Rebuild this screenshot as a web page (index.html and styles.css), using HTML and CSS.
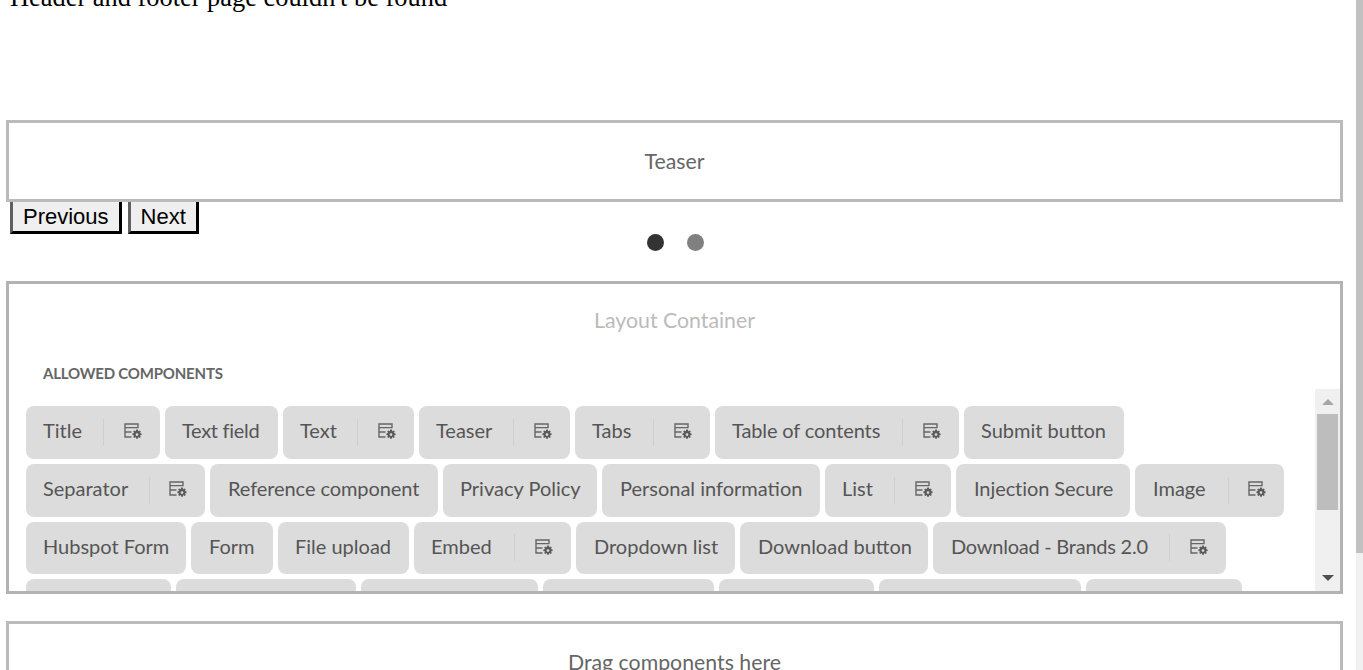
FILE: index.html
```html
<!DOCTYPE html>
<html lang="en">
<head>
<meta charset="utf-8">
<title>Page editor</title>
<link rel="stylesheet" href="styles.css">
</head>
<body>
<svg class="defs" width="0" height="0" aria-hidden="true">
  <symbol id="cfg" viewBox="0 0 18 18">
    <path d="M1 1h13v3.6H1zM1 4.6V14h6.5M1 9h6.5" fill="none" stroke="#666" stroke-width="1.4"/>
    <path d="M12.2 6.6h1.6l.4 1.7 1.5-.9 1.1 1.1-.9 1.5 1.7.4v1.6l-1.7.4.9 1.5-1.1 1.1-1.5-.9-.4 1.7h-1.6l-.4-1.7-1.5.9-1.1-1.1.9-1.5-1.7-.4v-1.6l1.7-.4-.9-1.5 1.1-1.1 1.5.9z" fill="#5a5a5a"/>
    <circle cx="13" cy="11.6" r="1.3" fill="#dcdcdc"/>
  </symbol>
</svg>
<div class="shell">
  <main class="page">
    <p class="notice">Header and footer page couldn't be found</p>
    <section class="box teaser">Teaser</section>
    <div class="controls">
      <button class="nav" type="button">Previous</button>
      <button class="nav" type="button">Next</button>
    </div>
    <div class="dots"><span class="dot on"></span><span class="dot"></span></div>
    <section class="box layout">
      <h2 class="layout-title">Layout Container</h2>
      <h3 class="allowed">ALLOWED COMPONENTS</h3>
      <div class="list-wrap">
        <div class="chips">
          <div class="chip"><span>Title</span><i class="sep"></i><svg class="ic"><use href="#cfg"/></svg></div>
          <div class="chip"><span>Text field</span></div>
          <div class="chip"><span>Text</span><i class="sep"></i><svg class="ic"><use href="#cfg"/></svg></div>
          <div class="chip"><span>Teaser</span><i class="sep"></i><svg class="ic"><use href="#cfg"/></svg></div>
          <div class="chip"><span>Tabs</span><i class="sep"></i><svg class="ic"><use href="#cfg"/></svg></div>
          <div class="chip"><span>Table of contents</span><i class="sep"></i><svg class="ic"><use href="#cfg"/></svg></div>
          <div class="chip"><span>Submit button</span></div>
          <div class="chip"><span>Separator</span><i class="sep"></i><svg class="ic"><use href="#cfg"/></svg></div>
          <div class="chip"><span>Reference component</span></div>
          <div class="chip"><span>Privacy Policy</span></div>
          <div class="chip"><span>Personal information</span></div>
          <div class="chip"><span>List</span><i class="sep"></i><svg class="ic"><use href="#cfg"/></svg></div>
          <div class="chip"><span>Injection Secure</span></div>
          <div class="chip"><span>Image</span><i class="sep"></i><svg class="ic"><use href="#cfg"/></svg></div>
          <div class="chip"><span>Hubspot Form</span></div>
          <div class="chip"><span>Form</span></div>
          <div class="chip"><span>File upload</span></div>
          <div class="chip"><span>Embed</span><i class="sep"></i><svg class="ic"><use href="#cfg"/></svg></div>
          <div class="chip"><span>Dropdown list</span></div>
          <div class="chip"><span>Download button</span></div>
          <div class="chip"><span>Download - Brands 2.0</span><i class="sep"></i><svg class="ic"><use href="#cfg"/></svg></div>
          <div class="chip"></div>
          <div class="chip"></div>
          <div class="chip"></div>
          <div class="chip"></div>
          <div class="chip"></div>
          <div class="chip"></div>
          <div class="chip"></div>
        </div>
        <div class="mini-bar">
          <span class="arrow up"></span>
          <span class="mini-thumb"></span>
          <span class="arrow down"></span>
        </div>
      </div>
    </section>
    <section class="box drop">Drag components here</section>
  </main>
  <div class="page-bar"><span class="page-thumb"></span></div>
</div>
</body>
</html>
```
FILE: styles.css
```css
html, body { margin: 0; height: 100%; overflow: hidden; background: #fff; }
.defs { position: absolute; }
.shell { display: flex; height: 670px; overflow: hidden; }
.page { flex: 1; min-width: 0; padding: 0 13px 0 6px; overflow: hidden; font-family: "Lato", "Liberation Sans", sans-serif; }
.notice { margin: -18px 0 0 4px; height: 138px; font: 26.4px/30px "Liberation Serif", serif; color: #000; }
.box { border: 3px solid #bbb; background: #fff; box-sizing: border-box; text-align: center; color: #666; font-size: 21.3px; }
.teaser { position: relative; z-index: 1; height: 82px; line-height: 76px; }
.controls { display: flex; gap: 6px; margin: -4px 0 0 4px; height: 36px; }
.nav { box-sizing: border-box; height: 36px; padding: 2px 10px 0; border: 3px solid; border-color: #777 #000 #000 #606060; background: #efefef; color: #000; font: 22px "Liberation Sans", sans-serif; }
.dots { display: flex; justify-content: center; gap: 23px; padding-left: 1px; height: 47px; align-items: flex-start; }
.dot { width: 17px; height: 17px; border-radius: 50%; background: #808080; }
.dot.on { background: #333; }
.layout { height: 313px; border-color: #b3b3b3; text-align: left; overflow: hidden; }
.layout-title { margin: 0; padding-top: 23px; height: 35px; line-height: 26px; text-align: center; font-size: 21.3px; font-weight: 400; color: #bbb; }
.allowed { margin: 0; padding: 22px 0 0 34px; height: 47px; box-sizing: border-box; font-size: 15px; line-height: 18px; font-weight: 700; color: #666; letter-spacing: -.2px; }
.list-wrap { display: flex; height: 203px; }
.chips { flex: 1; min-width: 0; display: flex; flex-wrap: wrap; align-content: flex-start; gap: 5px; padding: 17px 20px 0 17px; overflow: hidden; }
.chip { display: flex; flex: none; align-items: center; height: 52.75px; padding: 0 17px; box-sizing: border-box; border-radius: 8px; background: #dcdcdc; color: #555; font-size: 20px; white-space: nowrap; }
.chip span { padding-bottom: 4px; }
.chip:nth-child(1) { width: 134px; }
.chip:nth-child(2) { width: 113px; letter-spacing: -.3px; }
.chip:nth-child(3) { width: 131px; }
.chip:nth-child(4) { width: 151px; }
.chip:nth-child(5) { width: 135px; }
.chip:nth-child(6) { width: 244px; letter-spacing: -.12px; }
.chip:nth-child(7) { width: 160px; }
.chip:nth-child(8) { width: 179px; }
.chip:nth-child(9) { width: 228px; padding-left: 18px; letter-spacing: -.08px; }
.chip:nth-child(10) { width: 154px; }
.chip:nth-child(11) { width: 218px; padding-left: 18px; }
.chip:nth-child(12) { width: 126px; }
.chip:nth-child(13) { width: 174px; padding-left: 18px; letter-spacing: -.08px; }
.chip:nth-child(14) { width: 149px; padding-left: 18px; }
.chip:nth-child(15) { width: 160px; }
.chip:nth-child(16) { width: 82px; padding-left: 18px; }
.chip:nth-child(17) { width: 131px; }
.chip:nth-child(18) { width: 157px; }
.chip:nth-child(19) { width: 159px; padding-left: 18px; }
.chip:nth-child(20) { width: 188px; padding-left: 18px; }
.chip:nth-child(21) { width: 293px; padding-left: 18px; letter-spacing: -.24px; }
.chip:nth-child(22) { width: 145px; }
.chip:nth-child(23) { width: 180px; }
.chip:nth-child(24) { width: 177px; }
.chip:nth-child(25) { width: 171px; }
.chip:nth-child(26) { width: 155px; }
.chip:nth-child(27) { width: 202px; }
.chip:nth-child(28) { width: 156px; }
.sep { width: 1px; height: 27px; margin: 0 20px 0 auto; background: #cfcfcf; }
.chip:nth-child(8) .sep, .chip:nth-child(14) .sep { margin-right: 19px; }
.ic { width: 18px; height: 18px; margin-right: 1px; }
.mini-bar { flex: none; width: 25px; background: #f0f0f0; display: flex; flex-direction: column; align-items: center; }
.arrow { width: 0; height: 0; border-left: 6px solid transparent; border-right: 6px solid transparent; }
.arrow.up { margin-top: 10px; border-bottom: 6px solid #a6a6a6; }
.mini-thumb { width: 21px; height: 96px; margin-top: 9px; background: #bdbdbd; }
.arrow.down { margin-top: 65px; border-top: 6px solid #505050; }
.drop { margin-top: 27px; height: 120px; padding-top: 25px; line-height: 26px; }
.page-bar { flex: none; width: 7px; background: #f1f1f1; }
.page-thumb { display: block; height: 553px; background: #c1c1c1; }
```
